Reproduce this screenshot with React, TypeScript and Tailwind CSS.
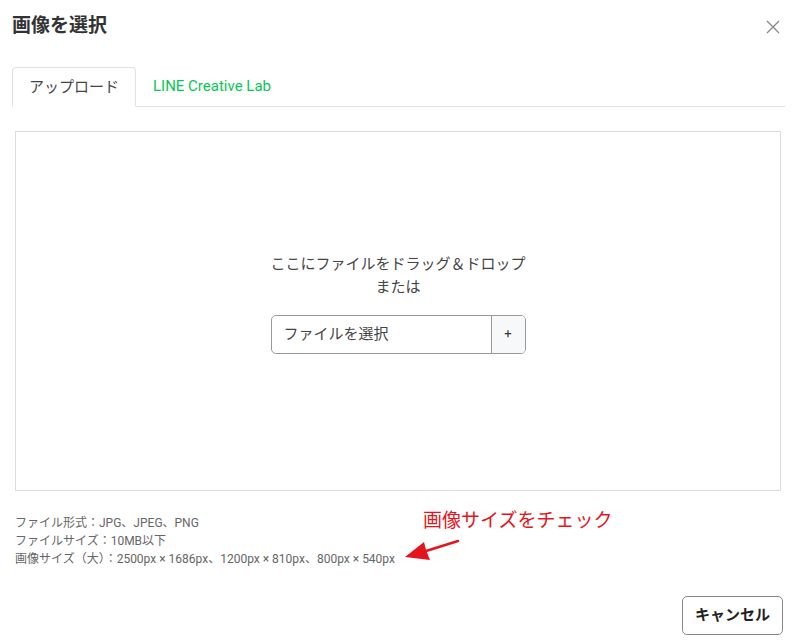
import React from 'react';

const font = { fontFamily: 'Roboto, "Noto Sans CJK JP", sans-serif' };

export default function App() {
  return (
    <div className="w-[797px] h-[643px] bg-white text-[#333] relative overflow-hidden" style={font}>
      {/* header */}
      <div className="flex items-center justify-between pl-3 pr-4 pt-[12px]">
        <h1 className="text-[19px] font-bold leading-[28px] text-[#333]">画像を選択</h1>
        <button className="w-4 h-4 flex items-center justify-center text-[#888] mt-[2px]">
          <svg width="14" height="14" viewBox="0 0 14 14" fill="none" stroke="currentColor" strokeWidth="1.3">
            <path d="M1 1L13 13M13 1L1 13" />
          </svg>
        </button>
      </div>

      {/* tabs */}
      <div className="mx-3 mt-[27px] flex border-b border-[#dee2e6] h-[40px]">
        <div className="w-[124px] h-[40px] border border-[#dee2e6] border-b-white rounded-t-[4px] -mb-px bg-white flex items-center justify-center text-[15px] text-[#444]">
          アップロード
        </div>
        <div className="pl-[17px] flex items-center text-[15px] text-[#06c755] font-normal">
          LINE Creative Lab
        </div>
      </div>

      {/* drop zone */}
      <div className="ml-[15px] mr-[16px] mt-[24px] h-[360px] border border-[#dcdcdc] flex flex-col items-center justify-center pb-[16px]">
        <p className="text-[15px] leading-[23px] text-[#444] text-center">
          ここにファイルをドラッグ＆ドロップ<br />または
        </p>
        <div className="mt-[16px] flex h-[39px] w-[255px] border border-[#999] rounded-[5px] overflow-hidden">
          <div className="flex-1 flex items-center pl-[12px] text-[15px] text-[#444]">ファイルを選択</div>
          <div className="w-[34px] border-l border-[#999] bg-[#f7f8fa] flex items-center justify-center text-[13px] text-[#333]">+</div>
        </div>
      </div>

      {/* info */}
      <div className="ml-[15px] mt-[23px] text-[12px] leading-[18px] text-[#666]">
        <p>ファイル形式：JPG、JPEG、PNG</p>
        <p>ファイルサイズ：10MB以下</p>
        <p>画像サイズ（大）：2500px × 1686px、1200px × 810px、800px × 540px</p>
      </div>

      {/* annotation */}
      <div className="absolute left-[423px] top-[507px] text-[19px] leading-[28px] text-[#e4151c]">
        画像サイズをチェック
      </div>
      <svg className="absolute left-[400px] top-[535px]" width="64" height="30" viewBox="0 0 64 30">
        <path d="M58 6 L26 16" stroke="#e4151c" strokeWidth="2.5" strokeLinecap="round" />
        <path d="M5 22 L24 7 L26 15 L30 25 Z" fill="#e4151c" />
      </svg>

      {/* footer */}
      <div className="absolute right-[14px] top-[596px]">
        <button className="h-[39px] w-[101px] border border-[#888] rounded-[5px] text-[15px] font-bold text-[#222] bg-white">
          キャンセル
        </button>
      </div>
    </div>
  );
}
